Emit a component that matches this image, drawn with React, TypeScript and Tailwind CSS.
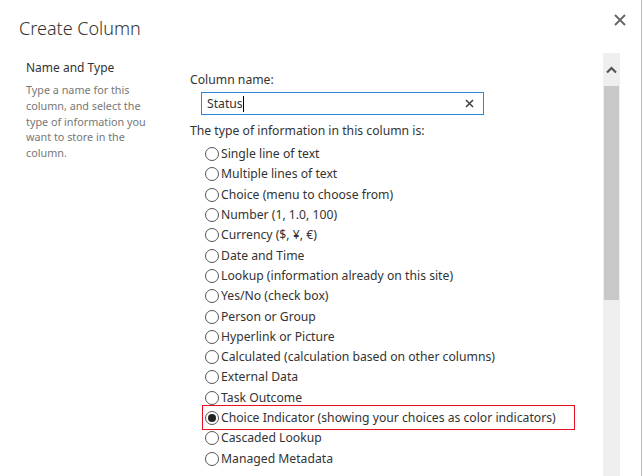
import React from "react";

const options = [
  "Single line of text",
  "Multiple lines of text",
  "Choice (menu to choose from)",
  "Number (1, 1.0, 100)",
  "Currency ($, ¥, €)",
  "Date and Time",
  "Lookup (information already on this site)",
  "Yes/No (check box)",
  "Person or Group",
  "Hyperlink or Picture",
  "Calculated (calculation based on other columns)",
  "External Data",
  "Task Outcome",
  "Choice Indicator (showing your choices as color indicators)",
  "Cascaded Lookup",
  "Managed Metadata",
];

function Radio({ checked }: { checked: boolean }) {
  return (
    <span className="w-[14px] h-[14px] rounded-full border border-[#555] bg-white flex items-center justify-center shrink-0">
      {checked && <span className="w-[8px] h-[8px] rounded-full bg-[#222]" />}
    </span>
  );
}

export default function App() {
  return (
    <div className="w-[642px] h-[476px] bg-white border-r border-[#bdbdbd] flex flex-col overflow-hidden text-[#333]" style={{ fontFamily: '"Segoe UI", "Noto Sans", "Open Sans", sans-serif' }}>
      <div className="h-[53px] flex justify-between shrink-0">
        <div className="pl-[19px] pt-[15px] text-[18px] font-light leading-[26px] text-[#333]">Create Column</div>
        <div className="pt-[14px] pr-[15px]">
          <svg width="12" height="12" viewBox="0 0 12 12">
            <path d="M1 1 L11 11 M11 1 L1 11" stroke="#666" strokeWidth="1.8" />
          </svg>
        </div>
      </div>
      <div className="flex flex-1 min-h-0">
        <div className="flex-1 flex">
          <div className="w-[190px] pl-[26px] pt-[6px] shrink-0">
            <div className="text-[12px] leading-[18px] text-[#333]">Name and Type</div>
            <div className="mt-[5px] text-[10.8px] leading-[15.8px] text-[#777] w-[130px]">
              Type a name for this column, and select the type of information you want to store in the column.
            </div>
          </div>
          <div className="pt-[18px] text-[12.2px]">
            <div className="leading-[18px]">Column name:</div>
            <div className="mt-[3px] ml-[11px] w-[283px] h-[23px] border border-[#2b88d8] flex items-center justify-between pl-[5px] pr-[9px]">
              <span className="leading-[18px] text-[#333] flex items-center">
                Status<span className="w-px h-[16px] bg-black" />
              </span>
              <svg width="9" height="9" viewBox="0 0 9 9">
                <path d="M1 1 L8 8 M8 1 L1 8" stroke="#444" strokeWidth="1.6" />
              </svg>
            </div>
            <div className="mt-[7px] leading-[18px]">The type of information in this column is:</div>
            <div className="mt-[4px] ml-[15px] flex flex-col">
              {options.map((o, i) => {
                const checked = i === 13;
                return (
                  <div
                    key={o}
                    className={
                      checked
                        ? "h-[25px] -my-[2.4px] w-[373px] -ml-[3px] pl-[2px] border border-[#e81123] flex items-center gap-[2px] whitespace-nowrap"
                        : "h-[20.3px] flex items-center gap-[2px] whitespace-nowrap"
                    }
                  >
                    <Radio checked={checked} />
                    <span className="leading-[18px]">{o}</span>
                  </div>
                );
              })}
            </div>
          </div>
        </div>
        <div className="w-[17px] mr-[21px] bg-[#efefef] flex flex-col items-center shrink-0">
          <div className="h-[33px] flex items-center justify-center">
            <svg width="11" height="8" viewBox="0 0 11 8">
              <path d="M1 6.5 L5.5 2 L10 6.5" stroke="#555" strokeWidth="2.2" fill="none" />
            </svg>
          </div>
          <div className="w-[15px] h-[214px] bg-[#c8c8c8]" />
        </div>
      </div>
    </div>
  );
}
